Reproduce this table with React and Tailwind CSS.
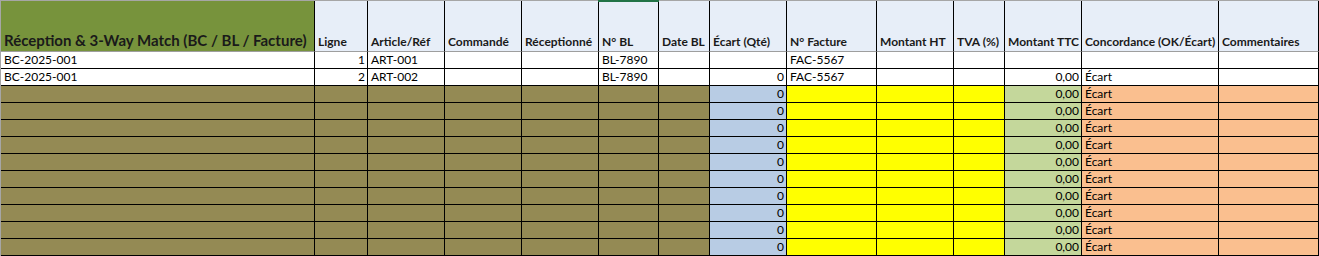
import React from "react";

const cols = "grid-cols-[314px_53px_77px_77px_77px_60px_51px_77px_90px_77px_51px_77px_137px_100px]";

const headers = [
  "Ligne",
  "Article/Réf",
  "Commandé",
  "Réceptionné",
  "N° BL",
  "Date BL",
  "Écart (Qté)",
  "N° Facture",
  "Montant HT",
  "TVA (%)",
  "Montant TTC",
  "Concordance (OK/Écart)",
  "Commentaires",
];

const OLIVE = "bg-[#948A54]";
const BLUE = "bg-[#B8CCE4]";
const YELLOW = "bg-[#FFFF00]";
const GREEN = "bg-[#C4D79B]";
const ORANGE = "bg-[#FABF8F]";

function Cell({ children, bg = "bg-white", right = false }) {
  return (
    <div
      className={`h-[17px] border-r border-b border-black flex items-end overflow-hidden whitespace-nowrap ${bg} ${
        right ? "justify-end pr-[2px]" : "pl-[3px]"
      }`}
    >
      <span className="leading-[14px] pb-[1px]">{children}</span>
    </div>
  );
}

export default function App() {
  const dataRows = [
    ["BC-2025-001", "1", "ART-001", "", "", "BL-7890", "", "", "FAC-5567", "", "", "", "", ""],
    ["BC-2025-001", "2", "ART-002", "", "", "BL-7890", "", "0", "FAC-5567", "", "", "0,00", "Écart", ""],
  ];
  const rightCols = [1, 7, 11];

  return (
    <div className="w-[1319px] h-[256px] overflow-hidden bg-white text-[12px] text-black font-['Lato',_'Liberation_Sans',_sans-serif]">
      <div className="relative border-t border-l border-[#A6A6A6]">
        <div className="absolute left-[597px] -top-px w-[61px] h-[2px] bg-[#217346]" />
        <div className={`grid ${cols}`}>
          <div className="h-[51px] bg-[#77933C] border-r border-b border-r-black border-b-[#9E9E9E] flex items-end pl-[3px] pb-[2px]">
            <span className="font-bold text-[15px] leading-[18px] text-[#1A1A1A] whitespace-nowrap">
              Réception &amp; 3-Way Match (BC / BL / Facture)
            </span>
          </div>
          {headers.map((h, i) => (
            <div
              key={i}
              className="h-[51px] bg-[#E7EEF8] border-r border-b border-r-black border-b-[#9E9E9E] flex items-end pl-[3px] pb-[2px] overflow-hidden whitespace-nowrap"
            >
              <span className="font-bold text-[12px] leading-[15px] text-[#1A1A1A]">{h}</span>
            </div>
          ))}

          {dataRows.map((r, ri) =>
            r.map((v, ci) => (
              <Cell key={`d${ri}-${ci}`} right={rightCols.includes(ci)}>
                {v}
              </Cell>
            ))
          )}

          {Array.from({ length: 10 }).map((_, ri) => (
            <React.Fragment key={`o${ri}`}>
              {Array.from({ length: 7 }).map((_, ci) => (
                <Cell key={`o${ri}-${ci}`} bg={OLIVE} />
              ))}
              <Cell bg={BLUE} right>
                0
              </Cell>
              <Cell bg={YELLOW} />
              <Cell bg={YELLOW} />
              <Cell bg={YELLOW} />
              <Cell bg={GREEN} right>
                0,00
              </Cell>
              <Cell bg={ORANGE}>Écart</Cell>
              <Cell bg={ORANGE} />
            </React.Fragment>
          ))}
        </div>
      </div>
    </div>
  );
}
